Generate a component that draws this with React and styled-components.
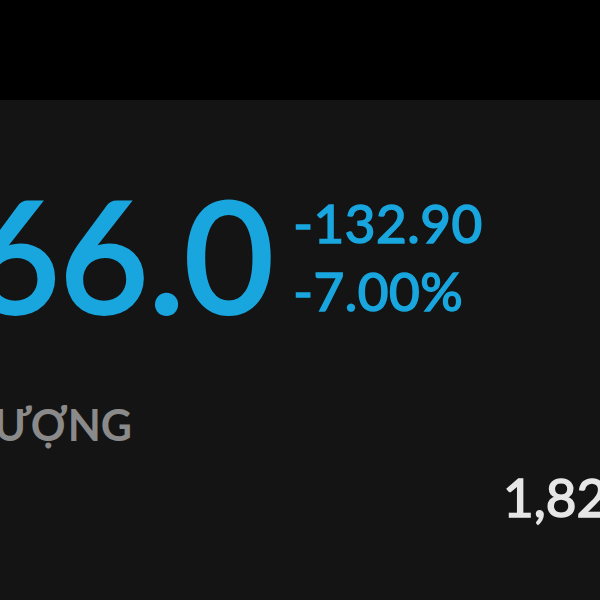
import React from "react";
import styled, { createGlobalStyle } from "styled-components";

const Global = createGlobalStyle`
  html, body { margin: 0; padding: 0; background: #141414; overflow: hidden; }
  body { font-family: Lato, "Noto Sans", sans-serif; }
`;

const Page = styled.div`
  width: 600px;
  height: 600px;
  overflow: hidden;
  background: #141414;
  display: flex;
  flex-direction: column;
`;

const TopBar = styled.div`
  height: 100px;
  background: #000;
  flex-shrink: 0;
`;

const Panel = styled.div`
  display: flex;
  flex-direction: column;
  padding-top: 78px;
`;

const PriceRow = styled.div`
  display: flex;
  align-items: flex-end;
  gap: 20px;
  margin-left: -29px;
  white-space: nowrap;
`;

const Price = styled.div`
  font-size: 153px;
  line-height: 1;
  font-weight: 400;
  color: #19a6df;
  -webkit-text-stroke: 4px #19a6df;
`;

const Changes = styled.div`
  display: flex;
  flex-direction: column;
  gap: 14px;
  padding-bottom: 13px;
`;

const Change = styled.div`
  font-size: 53px;
  line-height: 54px;
  font-weight: 400;
  color: #19a6df;
  letter-spacing: 0.5px;
  -webkit-text-stroke: 1.6px #19a6df;
`;

const Label = styled.div`
  margin-top: 72px;
  margin-left: ${(p) => p.$offset}px;
  font-size: 43px;
  font-weight: 700;
  color: #8a8a8a;
  white-space: nowrap;
  line-height: 1;
`;

const ValueRow = styled.div`
  display: flex;
  padding-left: 503px;
  margin-top: 24px;
  white-space: nowrap;
`;

const Value = styled.div`
  font-size: 53px;
  line-height: 1;
  font-weight: 400;
  color: #e6e6e6;
  -webkit-text-stroke: 1.6px #e6e6e6;
`;

export default function App() {
  return (
    <Page>
      <Global />
      <TopBar />
      <Panel>
        <PriceRow>
          <Price>66.0</Price>
          <Changes>
            <Change>-132.90</Change>
            <Change>-7.00%</Change>
          </Changes>
        </PriceRow>
        <Label $offset={-148}>KHỐI LƯỢNG</Label>
        <ValueRow>
          <Value>1,824,500</Value>
        </ValueRow>
      </Panel>
    </Page>
  );
}
